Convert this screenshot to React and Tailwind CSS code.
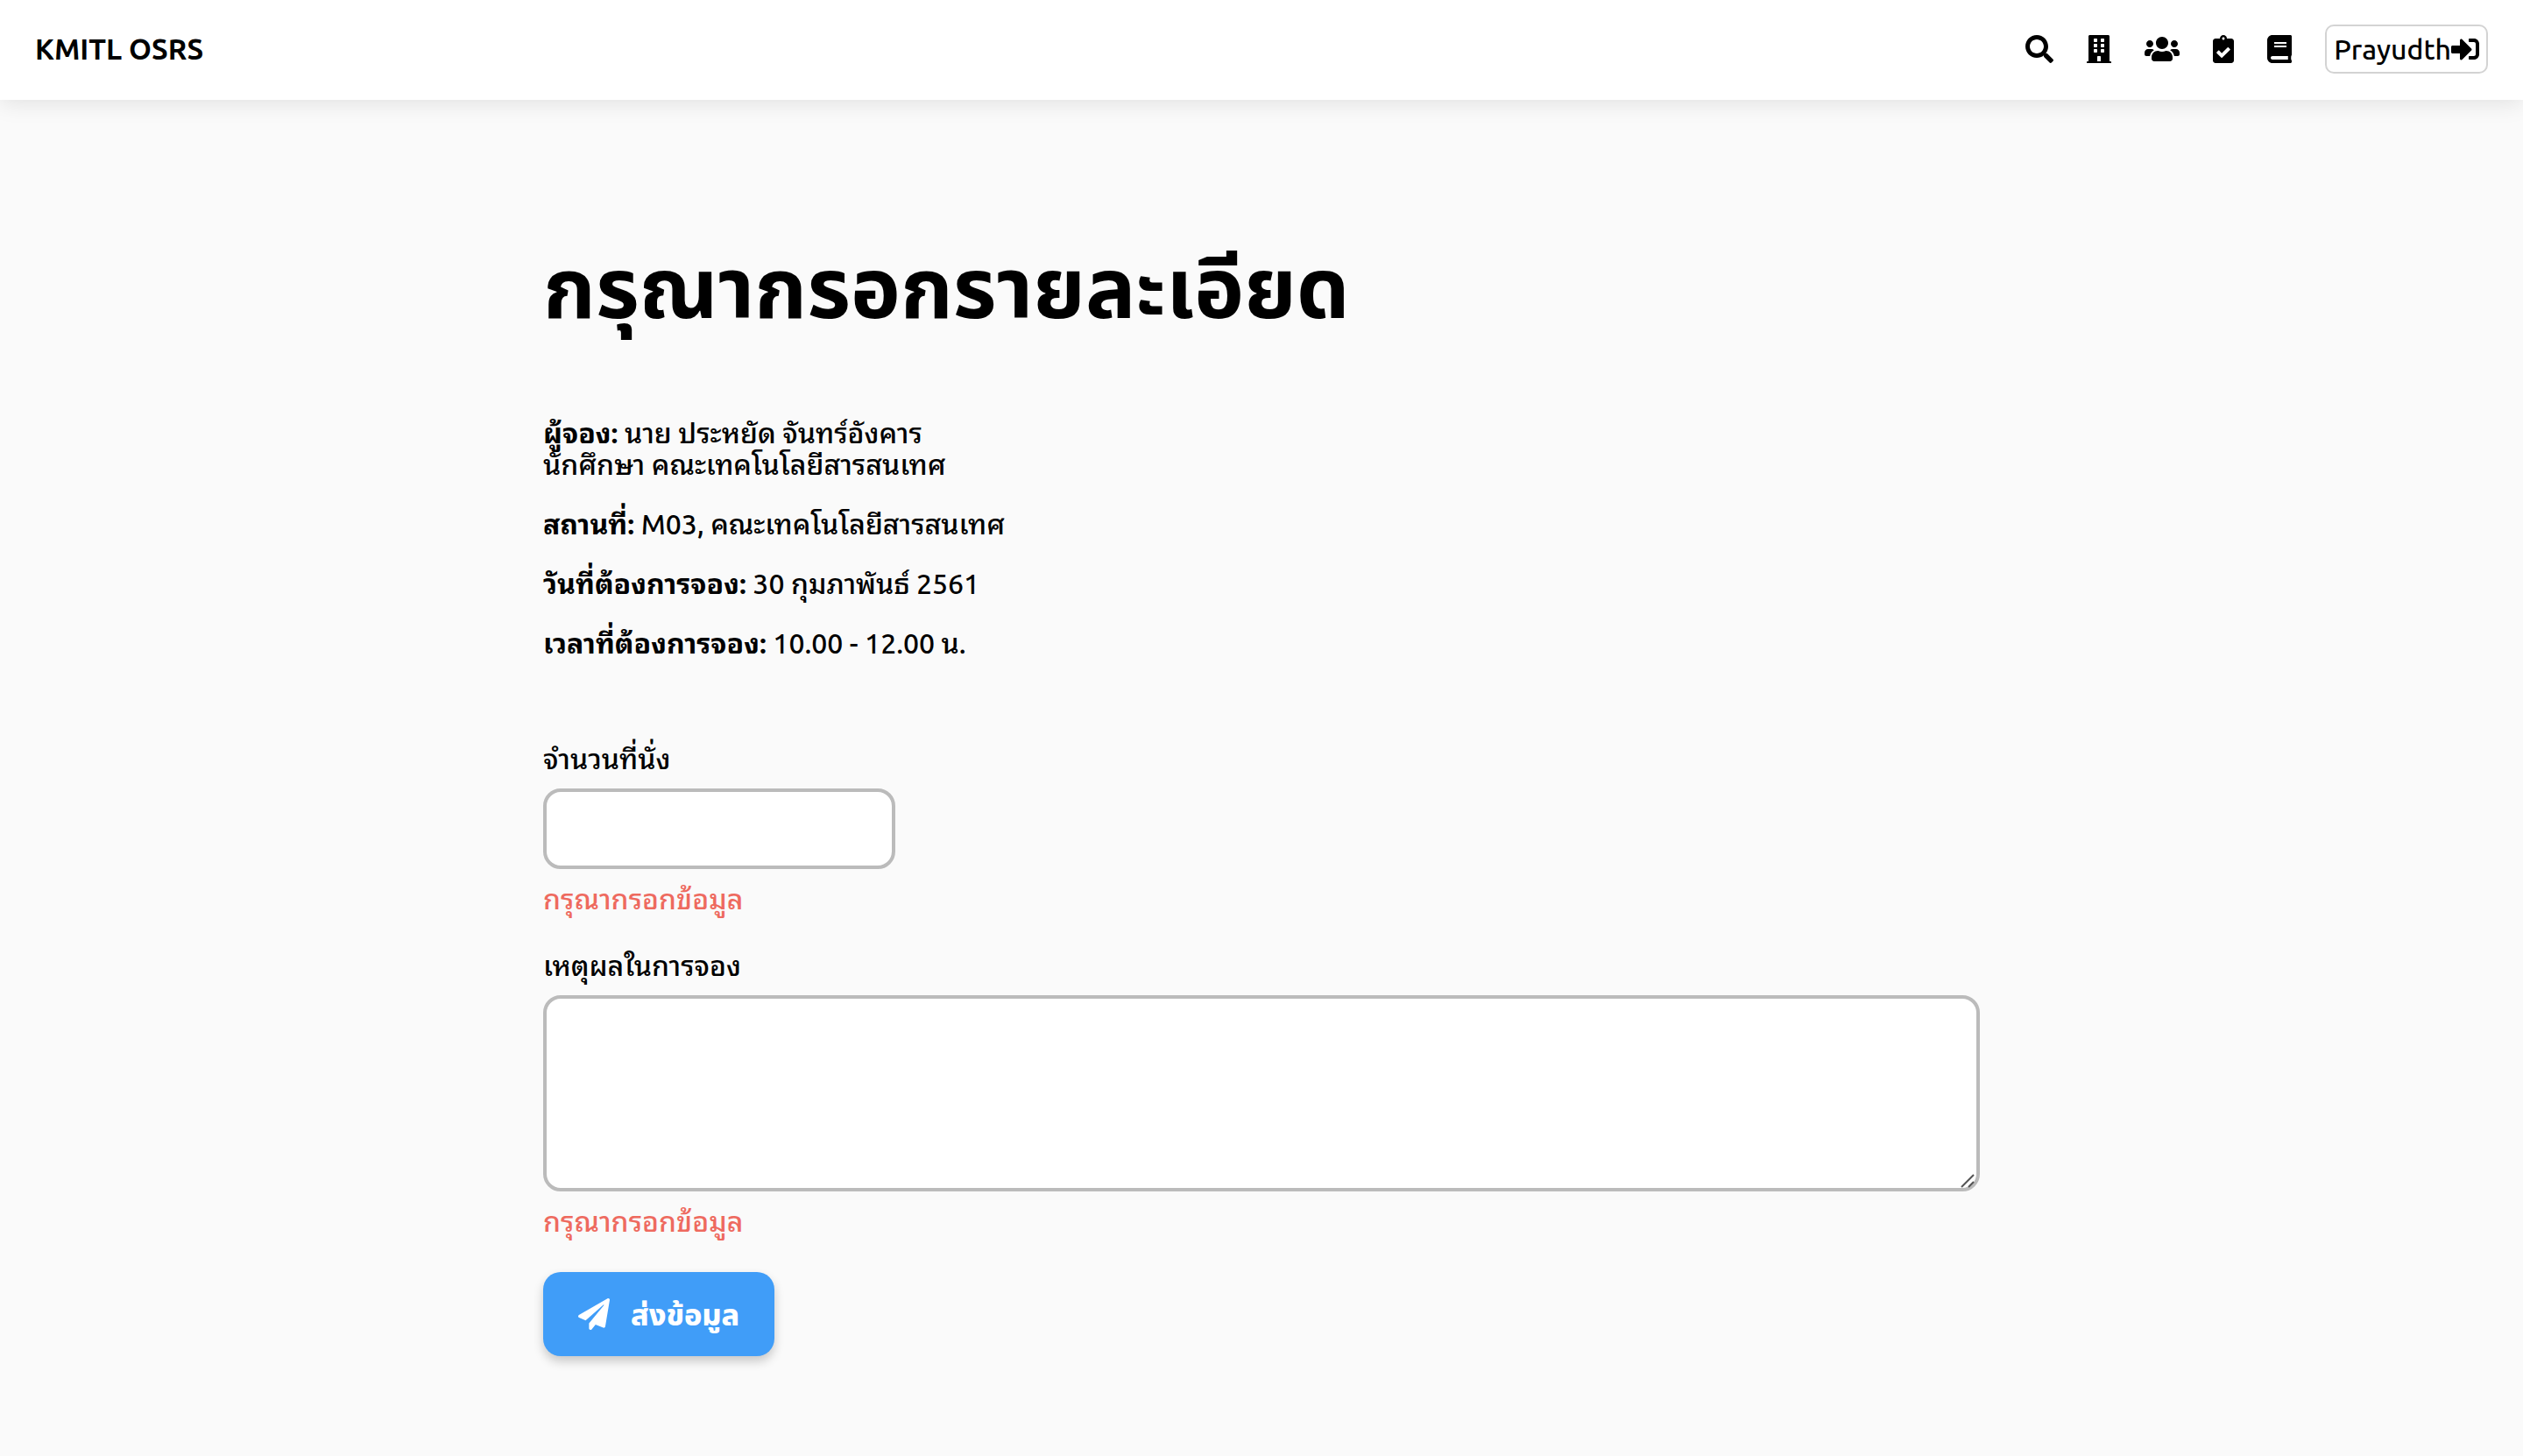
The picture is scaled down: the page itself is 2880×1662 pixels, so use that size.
import { FaSearch, FaBuilding, FaUsers, FaClipboardCheck, FaBook, FaSignInAlt, FaPaperPlane } from "react-icons/fa";

const links = [
  { label: "ค้นหา", Icon: FaSearch, size: "h-8 w-8" },
  { label: "สถานที่", Icon: FaBuilding, size: "h-8 w-7" },
  { label: "ผู้ใช้", Icon: FaUsers, size: "h-8 w-10" },
  { label: "อนุมัติ", Icon: FaClipboardCheck, size: "h-8 w-6" },
  { label: "คู่มือ", Icon: FaBook, size: "h-8 w-7" },
];

function Header() {
  return (
    <header className="flex items-center justify-between bg-white px-10 pt-7 pb-[30px] shadow-[0_4px_24px_rgba(0,0,0,0.1)]">
      <a href="#home" className="text-[33px] leading-10 font-bold">KMITL OSRS</a>
      <nav className="flex items-center gap-[38px]">
        {links.map(({ label, Icon, size }) => (
          <a key={label} href="#menu" aria-label={label}>
            <Icon className={size} />
          </a>
        ))}
        <button type="button" className="flex h-14 items-center rounded-[10px] border-2 border-[#d3d3d3] px-2 leading-10 font-medium">
          Prayudth
          <FaSignInAlt className="h-8 w-8" />
        </button>
      </nav>
    </header>
  );
}

function Detail({ label, children }) {
  return (
    <p className="leading-9">
      <strong className="font-bold">{label}:</strong> {children}
    </p>
  );
}

function ErrorText({ id }) {
  return <p id={id} className="mt-3.5 leading-10 text-[#ee6a5f]">กรุณากรอกข้อมูล</p>;
}

export default function App() {
  return (
    <div className="min-h-screen bg-[#fafafa] font-['Ubuntu','Noto_Sans_Thai_Looped','Noto_Sans',sans-serif] text-[32px] font-medium text-black">
      <Header />
      <main className="mx-auto max-w-[1640px] pt-38 pb-28">
        <h1 className="font-['Noto_Sans_Thai','Noto_Sans',sans-serif] text-[96px] leading-[136px] font-bold">กรุณากรอกรายละเอียด</h1>
        <section className="mt-[74px] flex flex-col gap-8">
          <Detail label="ผู้จอง">
            นาย ประหยัด จันทร์อังคาร
            <br />
            นักศึกษา คณะเทคโนโลยีสารสนเทศ
          </Detail>
          <Detail label="สถานที่">M03, คณะเทคโนโลยีสารสนเทศ</Detail>
          <Detail label="วันที่ต้องการจอง">30 กุมภาพันธ์ 2561</Detail>
          <Detail label="เวลาที่ต้องการจอง">10.00 - 12.00 น.</Detail>
        </section>
        <form className="mt-[94px]" onSubmit={(e) => e.preventDefault()}>
          <label htmlFor="seats" className="block leading-10">จำนวนที่นั่ง</label>
          <input id="seats" type="text" aria-describedby="seats-error" className="mt-3.5 block h-[92px] w-[402px] rounded-[20px] border-4 border-[#bbb] bg-white px-5" />
          <ErrorText id="seats-error" />
          <label htmlFor="reason" className="mt-9 block leading-10">เหตุผลในการจอง</label>
          <div className="relative mt-3.5">
            <textarea id="reason" aria-describedby="reason-error" className="block h-56 w-full resize-none rounded-[20px] border-4 border-[#bbb] bg-white px-5" />
            <svg aria-hidden="true" viewBox="0 0 16 16" className="pointer-events-none absolute right-1.5 bottom-1 h-4 w-4 fill-none stroke-[#555] stroke-2">
              <path d="M1 15 15 1M9 15l6-6" />
            </svg>
          </div>
          <ErrorText id="reason-error" />
          <button type="submit" className="mt-[38px] flex h-24 items-center gap-6 rounded-[20px] bg-[#409df8] px-10 font-['Noto_Sans_Thai','Noto_Sans',sans-serif] text-[34px] leading-10 font-extrabold text-white shadow-[0_6px_12px_rgba(0,0,0,0.2)]">
            <FaPaperPlane className="h-9 w-9" />
            <span className="pt-1.5">ส่งข้อมูล</span>
          </button>
        </form>
      </main>
    </div>
  );
}
